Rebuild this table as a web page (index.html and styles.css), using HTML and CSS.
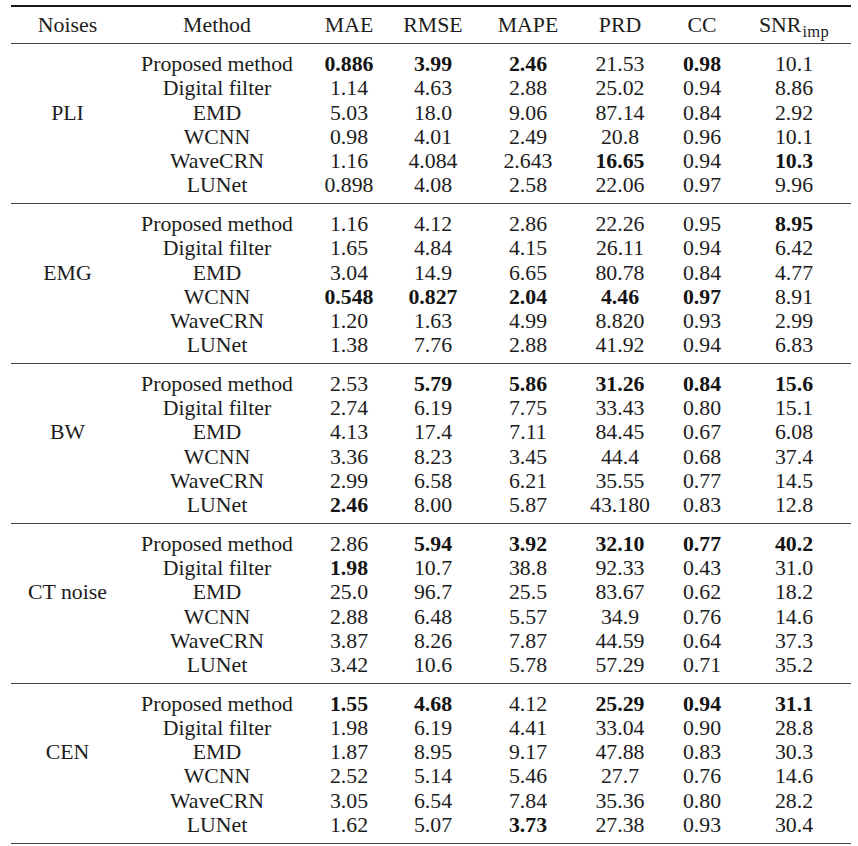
FILE: index.html
```html
<!DOCTYPE html>
<html lang="en">
<head>
<meta charset="utf-8">
<title>Denoising results</title>
<link rel="stylesheet" href="styles.css">
</head>
<body>
<div class="table">
  <div class="row head">
    <span>Noises</span><span>Method</span><span>MAE</span><span>RMSE</span><span>MAPE</span><span>PRD</span><span>CC</span><span>SNR<span class="sub">imp</span></span>
  </div>

  <div class="section">
    <div class="row"><span></span><span>Proposed method</span><span><b>0.886</b></span><span><b>3.99</b></span><span><b>2.46</b></span><span>21.53</span><span><b>0.98</b></span><span>10.1</span></div>
    <div class="row"><span></span><span>Digital filter</span><span>1.14</span><span>4.63</span><span>2.88</span><span>25.02</span><span>0.94</span><span>8.86</span></div>
    <div class="row"><span>PLI</span><span>EMD</span><span>5.03</span><span>18.0</span><span>9.06</span><span>87.14</span><span>0.84</span><span>2.92</span></div>
    <div class="row"><span></span><span>WCNN</span><span>0.98</span><span>4.01</span><span>2.49</span><span>20.8</span><span>0.96</span><span>10.1</span></div>
    <div class="row"><span></span><span>WaveCRN</span><span>1.16</span><span>4.084</span><span>2.643</span><span><b>16.65</b></span><span>0.94</span><span><b>10.3</b></span></div>
    <div class="row"><span></span><span>LUNet</span><span>0.898</span><span>4.08</span><span>2.58</span><span>22.06</span><span>0.97</span><span>9.96</span></div>
  </div>

  <div class="section">
    <div class="row"><span></span><span>Proposed method</span><span>1.16</span><span>4.12</span><span>2.86</span><span>22.26</span><span>0.95</span><span><b>8.95</b></span></div>
    <div class="row"><span></span><span>Digital filter</span><span>1.65</span><span>4.84</span><span>4.15</span><span>26.11</span><span>0.94</span><span>6.42</span></div>
    <div class="row"><span>EMG</span><span>EMD</span><span>3.04</span><span>14.9</span><span>6.65</span><span>80.78</span><span>0.84</span><span>4.77</span></div>
    <div class="row"><span></span><span>WCNN</span><span><b>0.548</b></span><span><b>0.827</b></span><span><b>2.04</b></span><span><b>4.46</b></span><span><b>0.97</b></span><span>8.91</span></div>
    <div class="row"><span></span><span>WaveCRN</span><span>1.20</span><span>1.63</span><span>4.99</span><span>8.820</span><span>0.93</span><span>2.99</span></div>
    <div class="row"><span></span><span>LUNet</span><span>1.38</span><span>7.76</span><span>2.88</span><span>41.92</span><span>0.94</span><span>6.83</span></div>
  </div>

  <div class="section">
    <div class="row"><span></span><span>Proposed method</span><span>2.53</span><span><b>5.79</b></span><span><b>5.86</b></span><span><b>31.26</b></span><span><b>0.84</b></span><span><b>15.6</b></span></div>
    <div class="row"><span></span><span>Digital filter</span><span>2.74</span><span>6.19</span><span>7.75</span><span>33.43</span><span>0.80</span><span>15.1</span></div>
    <div class="row"><span>BW</span><span>EMD</span><span>4.13</span><span>17.4</span><span>7.11</span><span>84.45</span><span>0.67</span><span>6.08</span></div>
    <div class="row"><span></span><span>WCNN</span><span>3.36</span><span>8.23</span><span>3.45</span><span>44.4</span><span>0.68</span><span>37.4</span></div>
    <div class="row"><span></span><span>WaveCRN</span><span>2.99</span><span>6.58</span><span>6.21</span><span>35.55</span><span>0.77</span><span>14.5</span></div>
    <div class="row"><span></span><span>LUNet</span><span><b>2.46</b></span><span>8.00</span><span>5.87</span><span>43.180</span><span>0.83</span><span>12.8</span></div>
  </div>

  <div class="section">
    <div class="row"><span></span><span>Proposed method</span><span>2.86</span><span><b>5.94</b></span><span><b>3.92</b></span><span><b>32.10</b></span><span><b>0.77</b></span><span><b>40.2</b></span></div>
    <div class="row"><span></span><span>Digital filter</span><span><b>1.98</b></span><span>10.7</span><span>38.8</span><span>92.33</span><span>0.43</span><span>31.0</span></div>
    <div class="row"><span>CT noise</span><span>EMD</span><span>25.0</span><span>96.7</span><span>25.5</span><span>83.67</span><span>0.62</span><span>18.2</span></div>
    <div class="row"><span></span><span>WCNN</span><span>2.88</span><span>6.48</span><span>5.57</span><span>34.9</span><span>0.76</span><span>14.6</span></div>
    <div class="row"><span></span><span>WaveCRN</span><span>3.87</span><span>8.26</span><span>7.87</span><span>44.59</span><span>0.64</span><span>37.3</span></div>
    <div class="row"><span></span><span>LUNet</span><span>3.42</span><span>10.6</span><span>5.78</span><span>57.29</span><span>0.71</span><span>35.2</span></div>
  </div>

  <div class="section">
    <div class="row"><span></span><span>Proposed method</span><span><b>1.55</b></span><span><b>4.68</b></span><span>4.12</span><span><b>25.29</b></span><span><b>0.94</b></span><span><b>31.1</b></span></div>
    <div class="row"><span></span><span>Digital filter</span><span>1.98</span><span>6.19</span><span>4.41</span><span>33.04</span><span>0.90</span><span>28.8</span></div>
    <div class="row"><span>CEN</span><span>EMD</span><span>1.87</span><span>8.95</span><span>9.17</span><span>47.88</span><span>0.83</span><span>30.3</span></div>
    <div class="row"><span></span><span>WCNN</span><span>2.52</span><span>5.14</span><span>5.46</span><span>27.7</span><span>0.76</span><span>14.6</span></div>
    <div class="row"><span></span><span>WaveCRN</span><span>3.05</span><span>6.54</span><span>7.84</span><span>35.36</span><span>0.80</span><span>28.2</span></div>
    <div class="row"><span></span><span>LUNet</span><span>1.62</span><span>5.07</span><span><b>3.73</b></span><span>27.38</span><span>0.93</span><span>30.4</span></div>
  </div>
</div>
</body>
</html>
```

FILE: styles.css
```css
html, body {
  margin: 0;
  padding: 0;
  background: #ffffff;
}

body {
  color: #1c1c1c;
  font-family: "Liberation Serif", Tinos, "Times New Roman", Times, "DejaVu Serif", serif;
  font-size: 21.8px;
}

.table {
  width: 840px;
  margin: 5px 7px 0 11px;
  border-top: 2px solid #1a1a1a;
}

.row {
  display: grid;
  grid-template-columns: 113px 186px 78px 90px 100px 84px 80px 104px;
  padding-right: 5px;
  line-height: 24.2px;
  text-align: center;
  white-space: nowrap;
}

.head {
  padding-top: 6px;
  padding-bottom: 6px;
  border-bottom: 1px solid #454545;
}

.section {
  padding-top: 8px;
  padding-bottom: 5.7px;
  border-bottom: 1px solid #454545;
}

.section b {
  font-weight: 700;
  color: #141414;
}

.sub {
  font-size: 16.5px;
  letter-spacing: 0.3px;
  line-height: 0;
  vertical-align: -5px;
  margin-left: 1px;
}
```
